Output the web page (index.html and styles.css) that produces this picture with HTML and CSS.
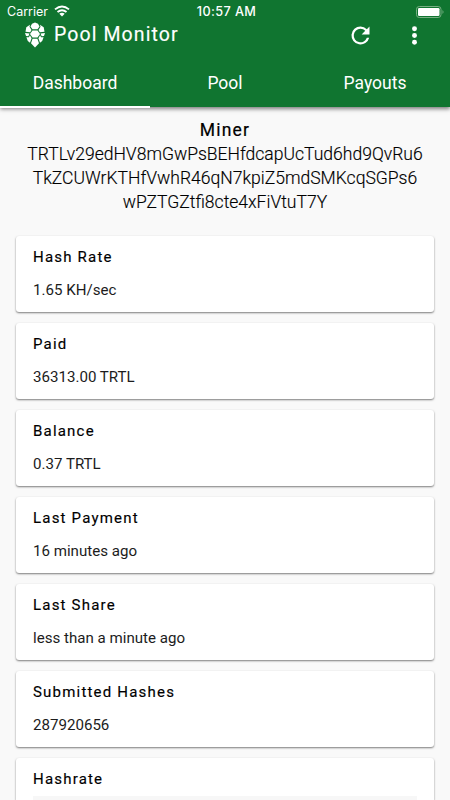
FILE: index.html
```html
<!DOCTYPE html>
<html lang="en">
<head>
<meta charset="utf-8">
<title>Pool Monitor</title>
<link rel="stylesheet" href="styles.css">
</head>
<body>
<header class="header">
  <div class="status">
    <div class="carrier"><span>Carrier</span>
      <svg class="wifi" viewBox="0 0 16 12"><path d="M1 4.4Q8-1.6 15 4.4M3.5 7Q8 3.3 12.500 7" fill="none" stroke="#fff" stroke-width="1.9"/><path d="M5.300 8.700Q8 6.600 10.700 8.700L8 11.500Z" fill="#fff"/></svg>
    </div>
    <div class="clock">10:57 AM</div>
    <svg class="battery" viewBox="0 0 28 12"><rect x=".5" y=".5" width="24.500" height="11" rx="2.800" fill="none" stroke="#77af82"/><rect x="2" y="2" width="21.500" height="8" rx="1.300" fill="#fff"/><path d="M26.500 4Q28.500 6 26.500 8Z" fill="#77af82"/></svg>
  </div>
  <div class="bar">
    <svg class="logo" viewBox="0 0 22 26"><g fill="#fff"><path d="M8 1.700 11 .5 14 1.700 15.500 4.500 13.500 7.300H8.500L6.500 4.500Z"/><path d="M6 2.700 5.500 4.800 7.500 8 6.200 10.200 1.500 9.800 2.300 5.200Z"/><path d="M16 2.700 16.500 4.800 14.500 8 15.800 10.200 20.500 9.800 19.700 5.200Z"/><path d="M8.500 8.400H13.500L16 12 13.500 15.600H8.500L6 12Z"/><path d="M1 11 5.500 11.400 4.300 14.200 2 14Z"/><path d="M21 11 16.500 11.400 17.700 14.200 20 14Z"/><path d="M5.900 13.300 7.600 16.200 6 20.700 3.800 19 2.400 15.200 4.900 15.300Z"/><path d="M16.100 13.300 14.400 16.200 16 20.700 18.200 19 19.600 15.200 17.100 15.300Z"/><path d="M8.600 16.800H13.400L15 21.200 11 25.500 7 21.200Z"/></g></svg>
    <h1 class="title">Pool Monitor</h1>
    <svg class="refresh" viewBox="0 0 24 24"><path fill="#fff" d="M17.650 6.350A7.958 7.958 0 0 0 12 4a8 8 0 1 0 7.730 10h-2.080A6 6 0 1 1 12 6c1.660 0 3.140.690 4.220 1.780L13 11h7V4z"/></svg>
    <svg class="more" viewBox="0 0 24 24"><g fill="#fff"><circle cx="12" cy="6" r="2.200"/><circle cx="12" cy="12" r="2.200"/><circle cx="12" cy="18" r="2.200"/></g></svg>
  </div>
  <nav class="tabs"><div class="tab active">Dashboard</div><div class="tab">Pool</div><div class="tab">Payouts</div></nav>
</header>
<main class="content">
  <section class="miner">
    <h2 class="miner-title">Miner</h2>
    <div class="address">TRTLv29edHV8mGwPsBEHfdcapUcTud6hd9QvRu6<br>TkZCUWrKTHfVwhR46qN7kpiZ5mdSMKcqSGPs6<br>wPZTGZtfi8cte4xFiVtuT7Y</div>
  </section>
  <div class="cards">
    <section class="card"><h3>Hash Rate</h3><p>1.65 KH/sec</p></section>
    <section class="card"><h3>Paid</h3><p>36313.00 TRTL</p></section>
    <section class="card"><h3>Balance</h3><p>0.37 TRTL</p></section>
    <section class="card"><h3>Last Payment</h3><p>16 minutes ago</p></section>
    <section class="card"><h3>Last Share</h3><p>less than a minute ago</p></section>
    <section class="card"><h3>Submitted Hashes</h3><p>287920656</p></section>
    <section class="card card-chart"><h3>Hashrate</h3><div class="chart"></div></section>
  </div>
</main>
</body>
</html>
```
FILE: styles.css
```css
* { box-sizing: border-box; }
body { margin: 0; height: 800px; overflow: hidden; display: flex; flex-direction: column; background: #f9f9f9; color: #000; font-family: Roboto, sans-serif; }
h1, h2, h3, p { margin: 0; }
svg { display: block; flex: none; }
.header { flex: none; height: 107px; background: #107530; color: #fff; box-shadow: 0 2px 4px rgba(0,0,0,.5); display: flex; flex-direction: column; z-index: 1; }
.status { height: 22px; padding: 0 6px 0 7px; display: grid; grid-template-columns: 1fr auto 1fr; align-items: center; font: 13px/22px Inter, sans-serif; }
.carrier { display: flex; align-items: center; gap: 6px; font-size: 12.500px; }
.wifi { width: 16px; height: 12px; margin-top: -1px; }
.clock { font-weight: 500; font-size: 12.700px; letter-spacing: .4px; margin-left: 2px; padding-top: 1px; }
.battery { width: 28px; height: 12px; justify-self: end; }
.bar { height: 38px; padding: 0 22px 0 24px; display: flex; align-items: center; }
.logo { width: 22px; height: 26px; margin-top: -12px; }
.title { font-size: 19.500px; line-height: 24px; font-weight: 400; letter-spacing: 1.100px; margin: -13px auto 0 8px; -webkit-text-stroke: .15px #fff; }
.refresh { width: 27px; height: 27px; margin-top: -12px; margin-right: 27px; }
.more { width: 27px; height: 27px; margin-top: -12px; }
.tabs { height: 47px; display: grid; grid-template-columns: repeat(3, 1fr); text-align: center; font-size: 17.500px; line-height: 46px; }
.tab.active { margin-bottom: -1px; border-bottom: 2px solid #fff; }
.content { padding: 11px 16px 0; }
.miner { height: 118px; text-align: center; line-height: 24px; }
.miner-title { font-size: 17.500px; font-weight: 400; line-height: 24px; letter-spacing: 1.200px; -webkit-text-stroke: .2px #000; }
.address { font-size: 17.550px; font-weight: 300; -webkit-text-stroke: .15px #000; white-space: nowrap; }
.cards { display: flex; flex-direction: column; gap: 11px; }
.card { height: 76px; padding: 12px 17px; border-radius: 3px; background: #fff; box-shadow: 0 1px 2px rgba(0,0,0,.5); }
.card h3 { font-size: 15px; line-height: 18px; font-weight: 400; letter-spacing: 1.200px; -webkit-text-stroke: .15px #000; }
.card p { font-size: 15.100px; line-height: 18px; margin-top: 15px; color: #1c1c1c; }
.card-chart { height: 42px; padding-bottom: 0; border-radius: 3px 3px 0 0; }
.chart { height: 4px; margin-top: 8px; background: #f7f7f7; }
```
